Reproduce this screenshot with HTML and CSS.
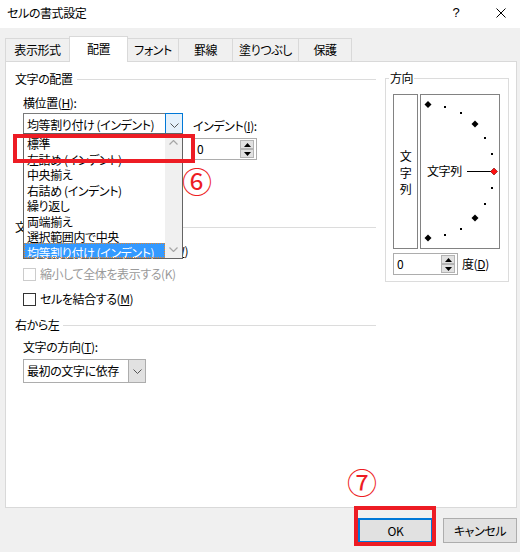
FILE: index.html
```html
<!DOCTYPE html>
<html lang="ja">
<head>
<meta charset="utf-8">
<title>セルの書式設定</title>
<link rel="stylesheet" href="styles.css">
</head>
<body>
<div class="dialog">
  <div class="titlebar">
    <span class="title">セルの書式設定</span>
    <span class="tb-btn tb-help">?</span>
    <span class="tb-btn tb-close"><svg width="10" height="10" viewBox="0 0 10 10"><path d="M0.5 0.5L9.5 9.5M9.5 0.5L0.5 9.5" stroke="#000" stroke-width="1"/></svg></span>
  </div>

  <div class="tabs">
    <div class="tab t1">表示形式</div>
    <div class="tab t2 active">配置</div>
    <div class="tab t3">フォント</div>
    <div class="tab t4">罫線</div>
    <div class="tab t5">塗りつぶし</div>
    <div class="tab t6">保護</div>
  </div>

  <div class="panel">
    <div class="left">
      <div class="grp grp1"><span>文字の配置</span><i class="rule"></i></div>
      <div class="align">
        <div class="colA">
          <div class="lbl lbl-h">横位置(<u>H</u>):</div>
          <div class="combo combo1">
            <span class="combo-text">均等割り付け (インデント)</span>
            <span class="drop drop-active"><svg width="9" height="5" viewBox="0 0 9 5"><polyline points="0.5,0.5 4.5,4.5 8.5,0.5" fill="none" stroke="#555" stroke-width="1"/></svg></span>
          </div>
        </div>
        <div class="colB">
          <div class="lbl lbl-indent">インデント(<u>I</u>):</div>
          <div class="spin spin-indent">
            <span class="spin-val">0</span>
            <span class="spin-btns">
              <span class="sb"><svg width="7" height="4" viewBox="0 0 7 4"><polygon points="3.5,0 7,4 0,4" fill="#000"/></svg></span>
              <span class="sb"><svg width="7" height="4" viewBox="0 0 7 4"><polygon points="0,0 7,0 3.5,4" fill="#000"/></svg></span>
            </span>
          </div>
        </div>
      </div>

      <div class="grp grp2"><span>文字の制御</span><i class="rule"></i></div>
      <div class="chk chk-wrap"><span class="box"></span>折り返して全体を表示する(<u>W</u>)</div>
      <div class="chk chk-shrink disabled"><span class="box"></span>縮小して全体を表示する(K)</div>
      <div class="chk chk-merge"><span class="box"></span>セルを結合する(<u>M</u>)</div>

      <div class="grp grp3"><span>右から左</span><i class="rule"></i></div>
      <div class="lbl lbl-dir">文字の方向(<u>T</u>):</div>
      <div class="combo combo2">
        <span class="combo-text">最初の文字に依存</span>
        <span class="drop drop-gray"><svg width="9" height="5" viewBox="0 0 9 5"><polyline points="0.5,0.5 4.5,4.5 8.5,0.5" fill="none" stroke="#555" stroke-width="1"/></svg></span>
      </div>
    </div>

    <fieldset class="orient">
      <legend>方向</legend>
      <div class="orient-row">
        <div class="vbox"><span>文</span><span>字</span><span>列</span></div>
        <div class="arc">
          <svg width="78" height="153" viewBox="0 0 78 153">
            <g fill="#000">
              <polygon points="7,6 10.5,9.5 7,13 3.5,9.5"/>
              <rect x="23" y="11" width="2" height="2"/>
              <rect x="39" y="17" width="2" height="2"/>
              <polygon points="54,25.5 57.5,29 54,32.5 50.5,29"/>
              <rect x="63" y="42" width="2" height="2"/>
              <rect x="70" y="58" width="2" height="2"/>
              <rect x="70" y="92" width="2" height="2"/>
              <rect x="63" y="108" width="2" height="2"/>
              <polygon points="54,119.5 57.5,123 54,126.5 50.5,123"/>
              <rect x="39" y="133" width="2" height="2"/>
              <rect x="23" y="139" width="2" height="2"/>
              <polygon points="7,139.5 10.5,143 7,146.5 3.5,143"/>
            </g>
            <line x1="46" y1="76.5" x2="70" y2="76.5" stroke="#000" stroke-width="1"/>
            <polygon points="73,73 76.5,76.5 73,80 69.5,76.5" fill="#ff1010" stroke="#700" stroke-width="0.6"/>
            <text x="6" y="81" class="arc-text">文字列</text>
          </svg>
        </div>
      </div>
      <div class="deg-row">
        <div class="spin spin-deg">
          <span class="spin-val">0</span>
          <span class="spin-btns">
            <span class="sb"><svg width="7" height="4" viewBox="0 0 7 4"><polygon points="3.5,0 7,4 0,4" fill="#000"/></svg></span>
            <span class="sb"><svg width="7" height="4" viewBox="0 0 7 4"><polygon points="0,0 7,0 3.5,4" fill="#000"/></svg></span>
          </span>
        </div>
        <span class="deg-lbl">度(<u>D</u>)</span>
      </div>
    </fieldset>

    <div class="list">
      <div class="list-items">
        <div class="li">標準</div>
        <div class="li">左詰め (インデント)</div>
        <div class="li">中央揃え</div>
        <div class="li">右詰め (インデント)</div>
        <div class="li">繰り返し</div>
        <div class="li">両端揃え</div>
        <div class="li">選択範囲内で中央</div>
        <div class="li sel">均等割り付け (インデント)</div>
      </div>
      <div class="vscroll">
        <span class="sarrow"><svg width="9" height="5" viewBox="0 0 9 5"><polyline points="0.5,4.5 4.5,0.5 8.5,4.5" fill="none" stroke="#a6a6a6" stroke-width="1.2"/></svg></span>
        <span class="sarrow"><svg width="9" height="5" viewBox="0 0 9 5"><polyline points="0.5,0.5 4.5,4.5 8.5,0.5" fill="none" stroke="#a6a6a6" stroke-width="1.2"/></svg></span>
      </div>
    </div>
    <div class="mark mark6"></div>
    <span class="num num6">⑥</span>
  </div>

  <div class="buttons">
    <div class="btn btn-ok">OK<span class="mark mark7"></span><span class="num num7">⑦</span></div>
    <div class="btn btn-cancel">キャンセル</div>
  </div>
</div>
</body>
</html>
```

FILE: styles.css
```css
* { box-sizing: border-box; }
html, body { margin: 0; padding: 0; }
body {
  font-family: "Noto Sans CJK JP", "Noto Sans", sans-serif;
  font-size: 12px;
  line-height: 16px;
  letter-spacing: -0.4px;
  color: #000;
  font-feature-settings: "palt";
  background: #f0f0f0;
}
u { text-decoration: underline; text-underline-offset: 1px; }

.dialog { width: 520px; height: 552px; background: #f0f0f0; overflow: hidden; }

/* title bar */
.titlebar { height: 28px; background: #fff; display: flex; align-items: flex-start; }
.title { flex: 1; padding: 5px 0 0 7px; }
.tb-btn { width: 40px; height: 28px; display: flex; align-items: center; justify-content: center; }
.tb-help { margin-right: 4px; font-family: "Liberation Sans", sans-serif; font-size: 13px; padding-bottom: 2px; }
.tb-close { padding-bottom: 2px; padding-left: 2px; }

/* tabs */
.tabs { display: flex; align-items: flex-end; height: 25px; margin-top: 8px; padding-left: 5px; position: relative; z-index: 2; }
.tab {
  height: 23px;
  border: 1px solid #d9d9d9;
  border-bottom: none;
  margin-left: -1px;
  display: flex; align-items: center; justify-content: center;
  background: #f0f0f0;
  white-space: nowrap;
}
.tab.t1 { width: 65px; margin-left: 0; }
.tab.t2 { width: 59px; }
.tab.t3 { width: 52px; }
.tab.t4 { width: 55px; }
.tab.t5 { width: 67px; }
.tab.t6 { width: 54px; }
.tab.active { height: 26px; margin-bottom: -1px; background: #fff; position: relative; z-index: 3; padding-bottom: 1px; }

/* panel */
.panel {
  position: relative;
  margin: 0 3px 0 5px;
  height: 447px;
  background: #fff;
  border: 1px solid #d9d9d9;
  display: flex;
  align-items: flex-start;
}
.left { width: 370px; padding-left: 9px; display: flex; flex-direction: column; }

.grp { display: flex; align-items: center; height: 16px; }
.grp .rule { flex: 1; height: 1px; background: #dcdcdc; margin-left: 4px; }
.grp1 { margin-top: 9px; }
.grp2 { margin-top: 32px; }
.grp3 { margin-top: 10px; }

.lbl { height: 16px; white-space: nowrap; }
.align { display: flex; padding-left: 8px; height: 100px; }
.colA { width: 160px; display: flex; flex-direction: column; }
.colB { margin-left: 10px; display: flex; flex-direction: column; }
.lbl-h { margin-top: 8px; }
.lbl-indent { margin-top: 31px; }
.lbl-dir { margin-top: 6px; margin-left: 8px; }
.colA .combo { margin-top: 2px; }

/* combo */
.combo { display: flex; height: 24px; }
.combo1 { width: 160px; }
.combo2 { width: 123px; margin-top: 4px; margin-left: 8px; }
.combo-text {
  flex: 1; min-width: 0;
  border: 1px solid #7a7a7a; border-right: none;
  background: #fff; padding-left: 3px;
  display: flex; align-items: center; white-space: nowrap; overflow: hidden;
}
.drop { width: 18px; border: 1px solid #7a7a7a; background: #fff; display: flex; align-items: center; justify-content: center; }
.drop-active { border-color: #0078d7; background: #e5f1fb; }
.combo2 .combo-text { border-color: #adadad; }
.drop-gray { background: #e1e1e1; border-color: #adadad; }

/* spin */
.spin { display: flex; height: 22px; border: 1px solid #adadad; background: #fff; }
.spin-indent { width: 64px; margin-top: 4px; }
.spin-deg { width: 65px; }
.spin-val { flex: 1; padding-left: 3px; display: flex; align-items: center; }
.spin-btns { width: 16px; display: flex; flex-direction: column; padding: 1px 2px 1px 0; }
.sb { flex: 1; background: #e1e1e1; border: 1px solid #b4b4b4; display: flex; align-items: center; justify-content: center; }

/* checkboxes */
.chk { display: flex; align-items: center; height: 16px; padding-left: 8px; white-space: nowrap; }
.chk .box { width: 13px; height: 13px; border: 1px solid #333; background: #fff; margin-right: 4px; }
.chk.disabled { color: #9a9a9a; }
.chk.disabled .box { border-color: #cccccc; }
.chk-wrap { margin-top: 8px; }
.chk-shrink { margin-top: 7px; }
.chk-merge { margin-top: 9px; }

/* orientation group */
.orient {
  margin: 8px 0 0 9px;
  padding: 8px 6px 6px 7px;
  width: 124px;
  min-width: 0;
  border: 1px solid #dcdcdc;
}
.orient legend { padding: 0 1px; margin-left: -4px; line-height: 16px; }
.orient-row { display: flex; gap: 2px; }
.vbox {
  width: 25px; height: 155px;
  border: 1px solid #828282; background: #fff;
  display: flex; flex-direction: column; align-items: center; justify-content: center;
  padding-top: 3px;
}
.vbox span { line-height: 16.5px; }
.arc { width: 80px; height: 155px; border: 1px solid #828282; background: #fff; }
.arc svg { display: block; }
.arc-text { font-family: "Noto Sans CJK JP", sans-serif; font-size: 12px; font-feature-settings: "palt"; fill: #000; }
.deg-row { display: flex; align-items: center; margin-top: 4px; }
.deg-lbl { margin-left: 4px; }

/* dropdown list overlay */
.list {
  position: absolute;
  left: 17px; top: 71px;
  width: 160px; height: 126px;
  border: 1px solid #646464;
  background: #fff;
  display: flex;
  z-index: 3;
}
.list-items { flex: 1; display: flex; flex-direction: column; min-width: 0; }
.li { height: 15.5px; line-height: 15px; padding: 2px 0 0 3px; white-space: nowrap; }
.li.sel { background: #3399ff; color: #fff; outline: 1px dotted #e8862a; outline-offset: -1px; }
.vscroll { width: 17px; background: #f0f0f0; display: flex; flex-direction: column; justify-content: space-between; align-items: center; }
.sarrow { height: 17px; display: flex; align-items: center; justify-content: center; }

/* annotations */
.mark { position: absolute; border: 4px solid #ed1c24; z-index: 4; }
.mark6 { left: 7px; top: 72px; width: 182px; height: 29px; }
.num {
  position: absolute; width: 30px; height: 30px;
  font-size: 30px; line-height: 30px; text-align: center;
  color: #ed1c24; z-index: 4; font-feature-settings: normal; letter-spacing: 0;
}
.num6 { left: 176px; top: 103px; }

/* buttons */
.buttons { display: flex; justify-content: flex-end; gap: 10px; padding-right: 3px; margin-top: 10px; }
.btn {
  position: relative;
  height: 25px;
  background: #e1e1e1;
  border: 1px solid #adadad;
  display: flex; align-items: center; justify-content: center;
}
.btn-ok { width: 75px; border: 2px solid #0078d7; }
.btn-cancel { width: 74px; }
.mark7 { left: -6px; top: -14px; right: -5px; bottom: -5px; }
.num7 { left: -13px; top: -54px; }
```
